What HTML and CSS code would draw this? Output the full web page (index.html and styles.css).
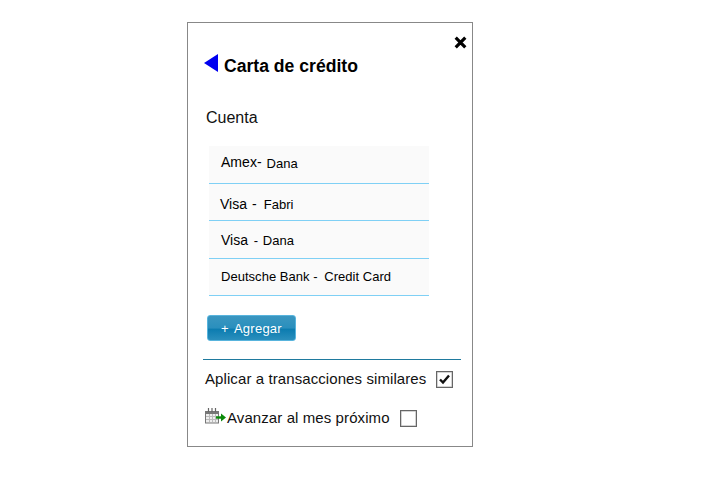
FILE: index.html
```html
<!DOCTYPE html>
<html lang="es">
<head>
<meta charset="utf-8">
<title>Carta de crédito</title>
<link rel="stylesheet" href="styles.css">
</head>
<body>
<div class="panel">
  <div class="close-row">
    <svg class="close" width="13" height="13" viewBox="0 0 13 13"><path d="M1.7 1.7L11.3 11.3M11.3 1.7L1.7 11.3" stroke="#000" stroke-width="3.2" fill="none"/></svg>
  </div>
  <div class="title-row">
    <svg class="back" width="14" height="18" viewBox="0 0 14 18"><path d="M14 0V18L0 9Z" fill="#0000f0"/></svg>
    <h1 class="title">Carta de crédito</h1>
  </div>
  <div class="section-label">Cuenta</div>
  <ul class="accounts">
    <li class="account a1"><span class="big">Amex</span><span class="big">- </span><span class="small">Dana</span></li>
    <li class="account a2"><span class="big">Visa</span><span class="sep2"> - </span><span class="small">Fabri</span></li>
    <li class="account a3"><span class="big">Visa</span><span class="sep3"> - </span><span class="small">Dana</span></li>
    <li class="account a4"><span>Deutsche Bank</span><span class="sep4"> - </span><span>Credit Card</span></li>
  </ul>
  <button class="add" type="button"><span class="plus">+</span><span>Agregar</span></button>
  <div class="rule"></div>
  <div class="option opt1">
    <span class="opt-label">Aplicar a transacciones similares</span>
    <span class="check">
      <svg width="13" height="12" viewBox="0 0 13 12"><path d="M2 6.5L5 9.5L11 2.5" stroke="#111" stroke-width="2.4" fill="none"/></svg>
    </span>
  </div>
  <div class="option opt2">
    <svg class="cal" width="21" height="16" viewBox="0 0 21 16">
      <rect x="0.5" y="3.5" width="13" height="11.5" fill="#eee" stroke="#777"/>
      <rect x="1" y="3" width="12" height="3" fill="#777"/>
      <path d="M3.5 0V4M7 0V4M10.5 0V4" stroke="#666" stroke-width="1.2"/>
      <path d="M1 8.5H13M1 11.5H13M4.5 6V14M7.5 6V14M10.5 6V14" stroke="#bbb" stroke-width="1"/>
      <path d="M11 9.5H17" stroke="#0a8a0a" stroke-width="2.4"/>
      <path d="M16 5.5L21 9.5L16 13.5Z" fill="#0a8a0a"/>
    </svg>
    <span class="opt-label">Avanzar al mes próximo</span>
    <span class="check"></span>
  </div>
</div>
</body>
</html>
```
FILE: styles.css
```css
* { box-sizing: border-box; }
html, body { margin: 0; padding: 0; background: #fff; }
body { width: 702px; height: 481px; padding: 22px 0 0 187px; font-family: "Liberation Sans", Arial, sans-serif; color: #000; }
.panel { width: 286px; height: 425px; border: 1px solid #888; padding: 0 11px 0 15px; background: #fff; display: flex; flex-direction: column; }
.close-row { display: flex; justify-content: flex-end; padding-top: 13px; height: 25px; margin-right: -6px; }
.close { display: block; }
.title-row { display: flex; align-items: flex-start; margin-top: 6px; margin-left: 1px; height: 22px; }
.back { display: block; }
.title { margin: 0 0 0 6px; font-size: 17.6px; line-height: 21px; font-weight: bold; padding-top: 2px; }
.section-label { margin-top: 33px; margin-left: 3px; font-size: 16px; line-height: 18px; color: #111; }
.accounts { list-style: none; margin: 19px 0 0 6px; padding: 0; width: 220px; }
.account { background: #fafafa; border-bottom: 1px solid #7fd0f5; font-size: 13px; line-height: 15px; white-space: pre; display: flex; letter-spacing: 0.03px; }
.a1 { height: 38px; padding: 9px 0 0 12px; }
.a2 { height: 37px; padding: 13px 0 0 11px; }
.a3 { height: 38px; padding: 12px 0 0 12px; }
.a4 { height: 37px; padding: 10px 0 0 12px; }
.big { font-size: 14px; }
.small { font-size: 13px; line-height: 15px; }
.a1 .small { margin-left: 1px; padding-top: 1px; }
.sep2 { font-size: 14px; padding: 0 3px 0 1px; }
.sep3 { font-size: 13px; padding: 0 1px 0 2px; }
.sep4 { padding-right: 3px; }
.add { margin: 19px 0 0 4px; width: 89px; height: 26px; border: 1px solid #58b4dd; border-radius: 3px; background: linear-gradient(#3a96c0 0, #2a8fbd 50%, #0c7cb0 55%, #2a8fbd 100%); color: #fff; font: 13px/16px "Liberation Sans", Arial, sans-serif; display: flex; justify-content: center; align-items: center; padding: 1px 0 0 0; letter-spacing: 0.25px; }
.plus { margin-right: 5px; }
.rule { height: 1px; background: #1f7a9e; margin: 18px 0 0 0; }
.option { display: flex; align-items: center; font-size: 15px; line-height: 18px; letter-spacing: 0.09px; color: #111; }
.opt1 { margin: 9px 0 0 2px; height: 20px; }
.opt2 { margin: 19px 0 0 2px; height: 20px; }
.opt-label { display: block; }
.check { width: 17px; height: 17px; border: 1px solid #666; box-shadow: inset 0 0 0 0.5px #aaa; display: flex; align-items: center; justify-content: center; margin-left: 10px; background: #fff; flex: none; }
.cal { margin-right: 1px; margin-top: -4px; }
```
